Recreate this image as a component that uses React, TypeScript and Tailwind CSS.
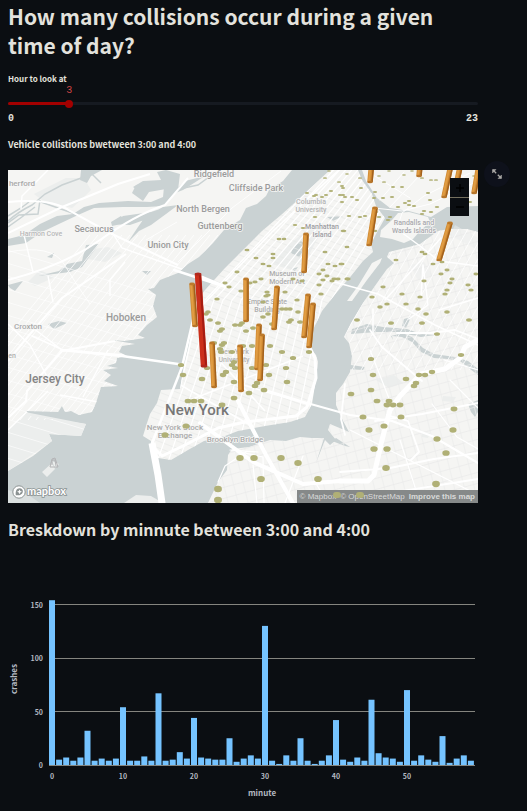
import { useState } from "react";

type Pt = [number, number];

const COUNTS = [
  154, 5, 7, 4, 7, 32, 4, 6, 4, 6, 54, 4, 4, 8, 4, 67, 4, 5, 12, 6, 44, 7, 6, 5, 5, 25, 3, 6, 9, 6,
  130, 4, 1, 9, 4, 25, 4, 1, 4, 9, 42, 5, 3, 7, 4, 61, 11, 7, 6, 3, 70, 4, 9, 5, 3, 27, 2, 6, 9, 4,
];

const DOTS: Pt[] = [
  [339,182],[342,186],[329,171],[325,178],[331,191],[307,193],[316,195],[314,196],[326,195],[340,195],[322,197],[342,202],
  [315,217],[295,225],[303,228],[343,231],[279,239],[284,239],[247,250],[256,258],[273,254],[273,258],[325,252],[347,247],
  [263,264],[269,266],[328,264],[335,266],[341,264],[237,272],[323,270],[319,274],[327,276],[323,280],[332,281],[338,279],
  [334,279],[348,279],[319,285],[321,294],[225,283],[229,287],[241,291],[261,279],[255,282],[250,283],[285,292],[267,292],
  [268,295],[266,296],[293,279],[302,281],[217,299],[208,312],[206,314],[210,320],[218,323],[222,329],[220,331],[235,325],
  [240,325],[242,323],[246,331],[253,328],[263,317],[268,314],[282,309],[286,309],[290,309],[291,320],[289,322],[300,322],
  [298,312],[247,302],[263,302],[297,300],[272,324],[181,365],[183,375],[202,379],[207,368],[188,401],[194,401],[201,401],
  [222,405],[186,426],[165,435],[214,343],[224,343],[222,345],[220,349],[221,352],[232,352],[243,346],[252,346],[270,346],
  [282,352],[293,358],[309,352],[286,368],[287,382],[269,375],[266,365],[264,390],[255,386],[257,383],[234,398],[249,393],
  [226,372],[223,375],[232,365],[234,362],[252,368],[234,382],[235,368],[240,458],[254,458],[281,458],[298,463],[261,479],
  [318,479],[218,489],[218,500],[371,359],[373,375],[371,390],[351,394],[377,401],[389,401],[387,405],[393,405],[400,405],
  [406,379],[419,375],[425,375],[432,372],[416,383],[414,386],[461,355],[363,417],[401,417],[384,426],[369,430],[454,409],
  [453,430],[437,439],[446,453],[374,449],[387,449],[386,468],[436,484],[342,264],[347,279],[396,260],[422,252],[425,254],
  [433,264],[442,262],[447,270],[441,274],[452,279],[450,283],[424,281],[383,287],[402,294],[372,297],[387,304],[380,307],
  [406,304],[420,297],[418,309],[426,314],[447,290],[445,294],[468,285],[471,290],[447,312],[469,320],[357,320],[391,323],
  [422,323],[437,334],[476,274],[344,231],[349,216],[360,217],[365,216],[379,217],[388,220],[390,217],[375,231],[405,203],
  [409,201],[409,205],[424,211],[431,212],[422,214],[392,197],[375,192],[374,198],[383,198],[384,182],[379,176],[393,187],
  [402,187],[422,178],[431,180],[436,180],[428,193],[412,171],[404,175],[430,200],[437,207],[398,207],[345,197],[352,197],
  [357,200],[343,195],[347,174],[361,188],[420,171],[470,202],[360,178],[389,171],[414,206],[376,212],[474,176],[343,188],
];

// top x, top y, base x, base y
const COLUMNS: [number, number, number, number][] = [
  [372,160,370,182],[421,155,419,176],[452,160,444,197],[462,158,455,190],[479,165,474,193],
  [375,208,369,245],[450,223,439,260],[306,234,304,272],[246,279,246,321],[192,284,195,326],
  [277,287,274,329],[308,295,304,337],[313,304,309,347],[259,325,257,369],[262,335,260,380],
  [212,343,214,387],[240,346,241,391],
];

type Label = { x: number; y: number; size: number; lines: string[]; fill?: string };
const LABELS: Label[] = [
  { x: 22, y: 186, size: 8, lines: ["herford"], fill: "#a9a9a9" },
  { x: 94, y: 232, size: 9, lines: ["Secaucus"] },
  { x: 41, y: 236, size: 7, lines: ["Harmon Cove"], fill: "#b8b8b8" },
  { x: 28, y: 329, size: 8, lines: ["Croxton"], fill: "#aaaaaa" },
  { x: 126, y: 321, size: 10, lines: ["Hoboken"] },
  { x: 168, y: 248, size: 9, lines: ["Union City"] },
  { x: 214, y: 177, size: 9, lines: ["Ridgefield"] },
  { x: 256, y: 191, size: 9, lines: ["Cliffside Park"] },
  { x: 203, y: 212, size: 9, lines: ["North Bergen"] },
  { x: 220, y: 229, size: 9, lines: ["Guttenberg"] },
  { x: 311, y: 204, size: 7, lines: ["Columbia", "University"], fill: "#b4b4b4" },
  { x: 322, y: 229, size: 7, lines: ["Manhattan", "Island"], fill: "#9d9da2" },
  { x: 287, y: 276, size: 7, lines: ["Museum of", "Modern Art"], fill: "#acacac" },
  { x: 267, y: 304, size: 7, lines: ["Empire State", "Building"], fill: "#acacac" },
  { x: 234, y: 354, size: 7, lines: ["New York", "University"], fill: "#b4b4b4" },
  { x: 414, y: 225, size: 7, lines: ["Randalls and", "Wards Islands"], fill: "#a9a9ad" },
  { x: 55, y: 383, size: 12, lines: ["Jersey City"], fill: "#858585" },
  { x: 175, y: 430, size: 8, lines: ["New York Stock", "Exchange"], fill: "#aaaaaa" },
  { x: 235, y: 442, size: 8, lines: ["Brooklyn Bridge"], fill: "#aaaaaa" },
  { x: 12, y: 358, size: 7, lines: ["en"], fill: "#b0b0b0" },
  { x: 197, y: 415, size: 15, lines: ["New York"], fill: "#777777" },
];

const MANHATTAN =
  "M330 170 L318 181 300 198 281 215 262 231 245 248 225 268 205 290 196 302 193 320 189 345 184 365 180 389 161 390 157 403 150 414 147 423 143 436 151 441 151 450 158 458 171 460 188 450 204 441 225 436 238 431 265 426 290 422 305 417 312 404 315 385 318 362 316 355 309 347 311 334 322 311 337 292 351 276 363 261 373 252 371 244 376 234 385 218 376 206 372 194 362 180 358 170Z";
const BROOKLYN =
  "M478 232 L467 229 449 229 438 231 420 244 405 248 389 252 387 257 394 263 387 269 377 283 363 303 351 323 344 337 349 343 352 356 350 372 343 384 336 393 336 405 341 417 349 432 342 429 330 424 328 430 336 440 330 445 325 440 316 463 324 438 312 438 300 437 286 441 270 440 249 447 232 449 228 455 227 470 218 482 208 503 478 503Z";
const JERSEY =
  "M8 170 L292 170 283 181 269 190 266 196 257 204 246 208 240 220 224 230 213 243 199 257 188 264 178 273 160 280 154 288 148 289 156 295 153 306 157 317 147 325 138 335 145 338 124 341 112 340 135 344 122 346 119 352 127 356 117 358 116 363 107 366 118 368 103 370 111 375 104 381 118 386 101 387 96 403 92 412 79 415 71 411 65 412 62 406 58 412 26 411 31 416 86 424 81 436 49 434 52 441 33 456 8 471Z";

function streets(count: number, at: (i: number) => string) {
  return Array.from({ length: count }, (_, i) => at(i)).join(" ");
}

const MANHATTAN_AVENUES = streets(15, (i) => `M${145 + i * 11} 465 L${205 + i * 9} 300 L${332 + i * 6} 165`);
const MANHATTAN_STREETS = streets(48, (i) => `M${150 + (i % 2)} ${130 + i * 7} L380 ${218 + i * 7}`);
const BROOKLYN_AVENUES = streets(44, (i) => `M${150 + i * 10} 230 L${220 + i * 10} 510`);
const BROOKLYN_STREETS = streets(34, (i) => `M200 ${285 + i * 11} L490 ${205 + i * 11}`);
const QUEENS_STREETS = streets(22, (i) => `M${325 + i * 9} 370 L${410 + i * 9} 220`);
const JERSEY_LONG = streets(28, (i) => `M${-60 + i * 8} 420 L${90 + i * 8} 235`);
const JERSEY_CROSS = streets(18, (i) => `M-10 ${245 + i * 13} L190 ${305 + i * 13}`);

function CollisionMap() {
  return (
    <svg viewBox="8 170 470 333" className="block w-full" role="img" aria-label="Map of vehicle collisions">
      <defs>
        <clipPath id="frame"><rect x="8" y="170" width="470" height="333" /></clipPath>
        <clipPath id="manhattan"><path d={MANHATTAN} /></clipPath>
        <clipPath id="brooklyn"><path d={BROOKLYN} /></clipPath>
        <clipPath id="jersey"><path d={JERSEY} /></clipPath>
      </defs>
      <g clipPath="url(#frame)">
        <rect x="8" y="170" width="470" height="333" fill="#cad2d3" />
        <g fill="#f5f5f3">
          <path d={JERSEY} />
          <path d={MANHATTAN} />
          <path d={BROOKLYN} />
          <path d="M362 170 L366 181 377 198 390 208 409 211 431 217 447 207 478 206 478 170Z" />
          <path d="M398 213 L409 212 428 217 430 222 420 231 413 239 404 243 392 239 380 237 381 230 392 220Z" />
          <path d="M382 258 L372 263 358 286 347 301 352 301 367 280 380 263Z" />
          <path d="M124 503 L133 497 136 495 151 496 163 503Z" fill="#eceeed" />
          <path d="M42 472 L52 463 55 469 47 477Z M52 461 L59 464 55 468Z" fill="#eceeed" />
        </g>
        <g fill="#eceeed">
          <path d="M25 412 L86 424 81 436 49 434 52 441 8 471 8 430Z" />
          <path d="M34 194 L66 178 84 178 91 190 81 200 72 208 42 200Z M86 250 L108 247 122 253 105 262 82 258Z" />
          <path d="M272 264 L288 245 310 228 324 226 309 255 291 270Z M28 282 L40 270 55 277 35 286Z" />
          <path d="M376 380 L394 375 403 383 389 388Z M443 396 L456 397 453 402 442 401Z M422 432 L430 433 428 438 422 437Z" />
          <path d="M8 490 L8 503 40 503 30 496Z M410 265 L424 262 432 275 418 280Z M455 225 L478 238 478 250 450 235Z" opacity=".5" />
        </g>
        <g fill="#cad2d3">
          <path d="M8 239 L24 235 40 224 57 216 73 214 84 207 99 203 128 201 151 202 163 197 164 187 157 183 139 191 133 187 143 181 161 180 157 172 166 170 180 174 178 190 171 197 164 206 147 207 123 207 94 208 78 215 61 223 42 232 26 243 8 246Z" />
          <path d="M162 181 L136 185 132 193 143 201 149 192 166 189Z M81 170 L102 170 91 176 87 183 80 180Z" />
          <path d="M113 224 L123 216 151 212 163 208 147 219 130 225Z M163 207 L178 205 166 214 151 225 139 231 128 242 138 227 145 217Z" />
          <path d="M86 245 L99 244 90 256 82 267 70 272 38 276 59 271 67 264 82 261Z M47 257 L54 253 52 258Z M8 285 L23 281 15 291 10 288Z" />
          <path d="M142 271 L151 271 147 275Z M48 324 L59 321 67 323 54 329Z M293 248 L301 241 310 248 303 251 299 257 291 253Z M327 217 L343 216 333 221Z M291 269 L298 267 295 271Z" />
          <path d="M111 222 L121 216 126 223 112 226Z M170 195 L185 181 205 176 183 190Z" />
          <path d="M478 375 L470 369 460 361 448 359 434 358 421 352 412 342 402 337 392 336 393 340 391 336 403 333 412 337 423 348 434 354 455 357 468 361 478 369Z" />
          <path d="M340 366 L351 365 365 367 363 370 345 369Z M336 438 L350 447 345 446 332 441Z M468 404 L478 400 478 412 475 417 471 412Z M404 319 L411 317 406 328 402 326Z" />
          <path d="M352 329 L367 324 383 327 407 329 421 334 435 335 421 337 397 332 377 332 351 334Z" />
        </g>
        <g fill="none" stroke="#cad2d3" strokeWidth="1.5">
          <path d="M8 221 Q18 212 32 205 L38 200 45 194 62 185 84 177 92 174 101 183 M40 200 L38 214 19 215 8 223 M41 202 L78 215 M8 227 Q21 218 35 207" />
          <path d="M170 198 L179 189 198 185 213 174 M8 216 L21 208 29 202" />
        </g>
        <g clipPath="url(#manhattan)" fill="none">
          <path d={MANHATTAN_STREETS} stroke="#e8e9e8" strokeWidth=".7" />
          <path d={MANHATTAN_AVENUES} stroke="#fff" strokeWidth="1.2" />
          <path d="M180 388 L191 340 201 307 232 274 272 232 340 169 M205 345 L265 411 M177 383 L250 425 M190 400 L303 356 M240 384 L310 405" stroke="#fff" strokeWidth="1.5" />
        </g>
        <g clipPath="url(#brooklyn)" fill="none">
          <path d={BROOKLYN_AVENUES} stroke="#ebeceb" strokeWidth=".7" />
          <path d={BROOKLYN_STREETS} stroke="#e9eae9" strokeWidth=".7" />
          <path d={QUEENS_STREETS} stroke="#fff" strokeWidth=".8" />
        </g>
        <g clipPath="url(#jersey)" fill="none" stroke="#fff">
          <path d={JERSEY_LONG} strokeWidth=".8" />
          <path d={JERSEY_CROSS} strokeWidth=".6" />
          <path d="M8 280 Q65 265 100 240 T165 205 L188 178 M8 233 L62 207 Q92 195 118 184 L150 174 M8 202 Q52 198 70 211 L112 234 178 265 M8 361 Q35 327 62 298 L126 254 M8 418 L26 401 27 391 62 351 115 341" strokeWidth="2" />
          <path d="M21 209 L22 196 48 170 M24 235 L33 272 M48 276 L53 302 M110 296 L110 280 125 262 M110 229 L122 248 190 272 M32 336 L61 349 M33 328 L62 350 125 355 M8 324 L30 345 50 382 M8 430 L48 391 M83 397 L108 350 M60 395 L98 402" strokeWidth="1.4" />
          <path d="M8 252 Q52 244 64 264 T90 304 M146 240 L177 222 M178 262 L232 208 281 171" strokeWidth=".8" />
        </g>
        <g fill="none" stroke="#fff" strokeLinecap="round" strokeLinejoin="round">
          <path d="M61 350 L122 356 185 365 M174 270 L226 287 M226 287 L202 277" strokeWidth="2.5" />
          <path d="M152 443 L158 475 163 510" strokeWidth="7" strokeLinecap="butt" />
          <path d="M200 423 L253 462 303 484 340 481 M238 401 L266 455 294 505" strokeWidth="4" />
          <path d="M153 447 L162 456 183 446 218 428 245 422 296 416 307 407 316 378 315 358 309 346" strokeWidth="3" />
          <path d="M152 443 L182 367 197 303" strokeWidth="2.5" />
          <path d="M262 389 L307 403 350 415 392 421 432 436 478 463" strokeWidth="2.2" />
          <path d="M478 340 L465 347 460 358 445 369 421 374 400 396 390 410 382 440 374 475 368 481 340 481" strokeWidth="5" />
          <path d="M370 330 L382 347 422 381 M340 472 L390 468 434 459 478 453 M340 491 L390 493 478 479 M375 421 L422 414 478 403 M397 333 L430 333 455 330 478 339 M387 415 L408 421 419 452 411 460 M345 384 L341 419 345 435" strokeWidth="1.8" />
          <path d="M320 278 L378 294 400 306 435 325 478 345 M385 300 L441 238 M373 332 L373 309 M409 319 L428 305 423 265 421 298 M397 229 L420 246 439 261 478 266 M439 310 L478 298" strokeWidth="1.5" />
          <path d="M240 452 L263 457 264 503 M230 450 L258 452 M218 482 L225 466 246 452 M253 465 L257 503 M303 456 L285 503 M315 482 L328 503 M350 430 L478 495 M400 440 L420 503 M370 350 L390 401 M450 380 L478 408 M444 360 L478 370 M432 404 L457 437 478 449" strokeWidth="1.2" />
          <path d="M374 208 L402 211 430 204 478 181 M397 229 L402 213 424 196 470 173 M370 173 L410 198 M380 200 L404 172 M390 207 L421 174" strokeWidth="1" />
        </g>
        <g fontFamily='Roboto, "Open Sans", sans-serif' fontWeight="500" textAnchor="middle" stroke="#f7f7f6" strokeWidth="1.5" paintOrder="stroke" strokeLinejoin="round">
          {LABELS.map((l) => (
            <text key={l.lines[0] + l.x} fontSize={l.size} fill={l.fill ?? "#9b9b9b"}>
              {l.lines.map((line, i) => (
                <tspan key={line} x={l.x} y={l.y + i * 8}>{line}</tspan>
              ))}
            </text>
          ))}
        </g>
        <path d="M50 467 L52 459 55 458 58 467Z M52 465 V460 H55 L56 466" fill="none" stroke="#b4b4b6" strokeWidth="1" />
        <g fill="#b0b076">
          {DOTS.map(([x, y], i) => {
            const rx = 2 + (y - 170) * 0.006;
            return <ellipse key={i} cx={x} cy={y} rx={rx} ry={rx * (0.4 + (y - 170) * 0.0013)} />;
          })}
        </g>
        {COLUMNS.map(([x1, y1, x2, y2], i) => (
          <g key={i} strokeLinecap="butt">
            <path d={`M${x1} ${y1}L${x2} ${y2}`} stroke="#d08a33" strokeWidth="5.5" />
            <path d={`M${x1 + 2} ${y1}L${x2 + 2} ${y2}`} stroke="#a2611d" strokeWidth="1.5" />
            <path d={`M${x1 - 1} ${y1}L${x2 - 1} ${y2}`} stroke="#e09c43" strokeWidth="2" />
            <ellipse cx={x1} cy={y1} rx="2.8" ry="1.4" fill="#bd7a2b" />
            <ellipse cx={x2} cy={y2} rx="2.8" ry="1.2" fill="#b7762b" />
          </g>
        ))}
        <path d="M198 274 L204 366" stroke="#cb2f1b" strokeWidth="6.5" />
        <path d="M200 274 L206 366" stroke="#a51c12" strokeWidth="2" />
        <ellipse cx="198" cy="274" rx="3.3" ry="1.5" fill="#b2281c" />
        <ellipse cx="204" cy="366" rx="3.3" ry="1.5" fill="#b2281c" />
      </g>
    </svg>
  );
}

function MapboxLogo() {
  return (
    <svg viewBox="0 0 60 14" className="h-3.5 w-[60px]" role="img" aria-label="mapbox">
      <circle cx="7" cy="7" r="6.2" fill="#fff" stroke="#8b9292" />
      <path d="M3.8 10.2 C3.3 6 4.5 3.2 7.6 3.2 C10 3.2 11.2 5 10.8 7 C10.3 9.8 7 10.8 3.8 10.2Z" fill="#8b9292" />
      <path d="M7.5 4.4 L8.3 6.1 10 6.8 8.3 7.6 7.5 9.2 6.8 7.6 5.1 6.8 6.8 6.1Z" fill="#fff" />
      <text x="15" y="10" fontSize="11" fontWeight="700" fontFamily="Lato, sans-serif" fill="#fff" stroke="#8b9292" strokeWidth="1.6" paintOrder="stroke">mapbox</text>
    </svg>
  );
}

function MinuteChart() {
  const y = (v: number) => 178 - v * 1.07;
  const x = (m: number) => 44 + m * 7.1;
  return (
    <svg viewBox="0 0 470 214" className="block w-full" role="img" aria-label="Crashes by minute" fontFamily='"Noto Sans CJK JP", sans-serif' fill="#b4b9c1">
      {[0, 50, 100, 150].map((v) => (
        <g key={v}>
          <path d={`M41 ${Math.floor(y(v)) + 0.5}H467`} stroke="#85857f" />
          <text x="35" y={y(v) + 3} fontSize="7" fontWeight="700" textAnchor="end">{v}</text>
        </g>
      ))}
      {COUNTS.map((v, m) => (
        <rect key={m} x={x(m) - 3} y={y(v)} width="6" height={178 - y(v)} fill="#75c3ff" />
      ))}
      {[0, 10, 20, 30, 40, 50].map((m) => (
        <text key={m} x={x(m)} y="192" fontSize="7" fontWeight="700" textAnchor="middle">{m}</text>
      ))}
      <text x="254" y="209" fontSize="8" fontWeight="700" textAnchor="middle">minute</text>
      <text transform="translate(9 92) rotate(-90)" fontSize="8" fontWeight="700" textAnchor="middle">crashes</text>
    </svg>
  );
}

export default function App() {
  const [hour, setHour] = useState(3);
  const left = `${(hour / 23) * 100}%`;
  const span = `${hour}:00 and ${hour + 1}:00`;
  return (
    <main className="min-h-screen bg-[#0b0e12] pr-[49px] pl-2 pt-0.5 font-['Noto_Sans_CJK_JP',sans-serif] text-[#e3e2dd]">
      <h1 className="text-[21px] leading-[29px] font-bold">How many collisions occur during a given time of day?</h1>
      <div className="pt-[13px]">
        <label htmlFor="hour" className="block text-[8px] leading-3 font-bold">Hour to look at</label>
        <div className="relative h-7">
          <output htmlFor="hour" className="absolute top-0 -translate-x-1/2 font-['Liberation_Mono',monospace] text-[10px] leading-3 text-[#d04545]" style={{ left }}>{hour}</output>
          <div className="absolute inset-x-0 top-[17px] h-[3px] overflow-hidden rounded-full bg-[#161a21]">
            <div className="h-full bg-[#a30000]" style={{ width: left }} />
          </div>
          <input
            id="hour"
            type="range"
            min={0}
            max={23}
            value={hour}
            onChange={(e) => setHour(Number(e.target.value))}
            className="absolute top-[14px] -left-1 h-[9px] w-[calc(100%+8px)] cursor-pointer appearance-none bg-transparent [&::-webkit-slider-thumb]:size-2 [&::-webkit-slider-thumb]:appearance-none [&::-webkit-slider-thumb]:rounded-full [&::-webkit-slider-thumb]:bg-[#a30000]"
          />
        </div>
        <div className="flex justify-between font-['Liberation_Mono',monospace] text-[10px] leading-3 font-bold">
          <span>0</span>
          <span>23</span>
        </div>
      </div>
      <p className="pt-3 text-[9px] leading-4 font-bold">Vehicle collistions bwetween {span}</p>
      <section className="relative mt-[17px]">
        <CollisionMap />
        <div className="absolute top-2 right-[9px] flex w-[19px] flex-col gap-px bg-[#75705f]">
          <button type="button" aria-label="Zoom in" className="flex h-[19px] items-center justify-center bg-[#0b0e12]">
            <svg viewBox="0 0 8 8" className="size-2" stroke="#000" strokeWidth="1.5"><path d="M4 0V8M0 4H8" /></svg>
          </button>
          <button type="button" aria-label="Zoom out" className="flex h-[18px] items-center justify-center bg-[#0b0e12]">
            <svg viewBox="0 0 8 8" className="size-2" stroke="#000" strokeWidth="1.5"><path d="M0 4H8" /></svg>
          </button>
        </div>
        <div className="absolute bottom-1 left-1 flex"><MapboxLogo /></div>
        <div className="absolute right-0 bottom-0 flex h-[13px] items-center gap-1 bg-[#868989] px-[3px] font-['Liberation_Sans',sans-serif] text-[8px] leading-3 whitespace-nowrap text-[#d9dada]">
          <a href="#mapbox">© Mapbox</a>
          <a href="#osm">© OpenStreetMap</a>
          <a href="#improve" className="font-bold">Improve this map</a>
          <span className="absolute top-0.5 left-9 h-1.5 w-2 rounded-full bg-[#b0b076]" />
          <span className="absolute top-0.5 left-[59px] h-1.5 w-2 rounded-full bg-[#b0b076]" />
        </div>
        <button type="button" aria-label="View fullscreen" className="absolute -top-[9px] -right-8 flex size-[26px] items-center justify-center rounded-full bg-[#0e111b]">
          <svg viewBox="0 0 10 10" className="size-2.5" fill="#aaa9a6" stroke="#aaa9a6">
            <path d="M.5 .5H4L.5 4ZM9.5 9.5H6L9.5 6Z" strokeWidth=".5" />
            <path d="M1 1L4.2 4.2M9 9L5.8 5.8" strokeWidth="1.3" />
          </svg>
        </button>
      </section>
      <h2 className="pt-[13px] text-[16px] leading-[26px] font-bold">Breskdown by minnute between {span}</h2>
      <div className="pt-[45px]">
        <MinuteChart />
      </div>
    </main>
  );
}
